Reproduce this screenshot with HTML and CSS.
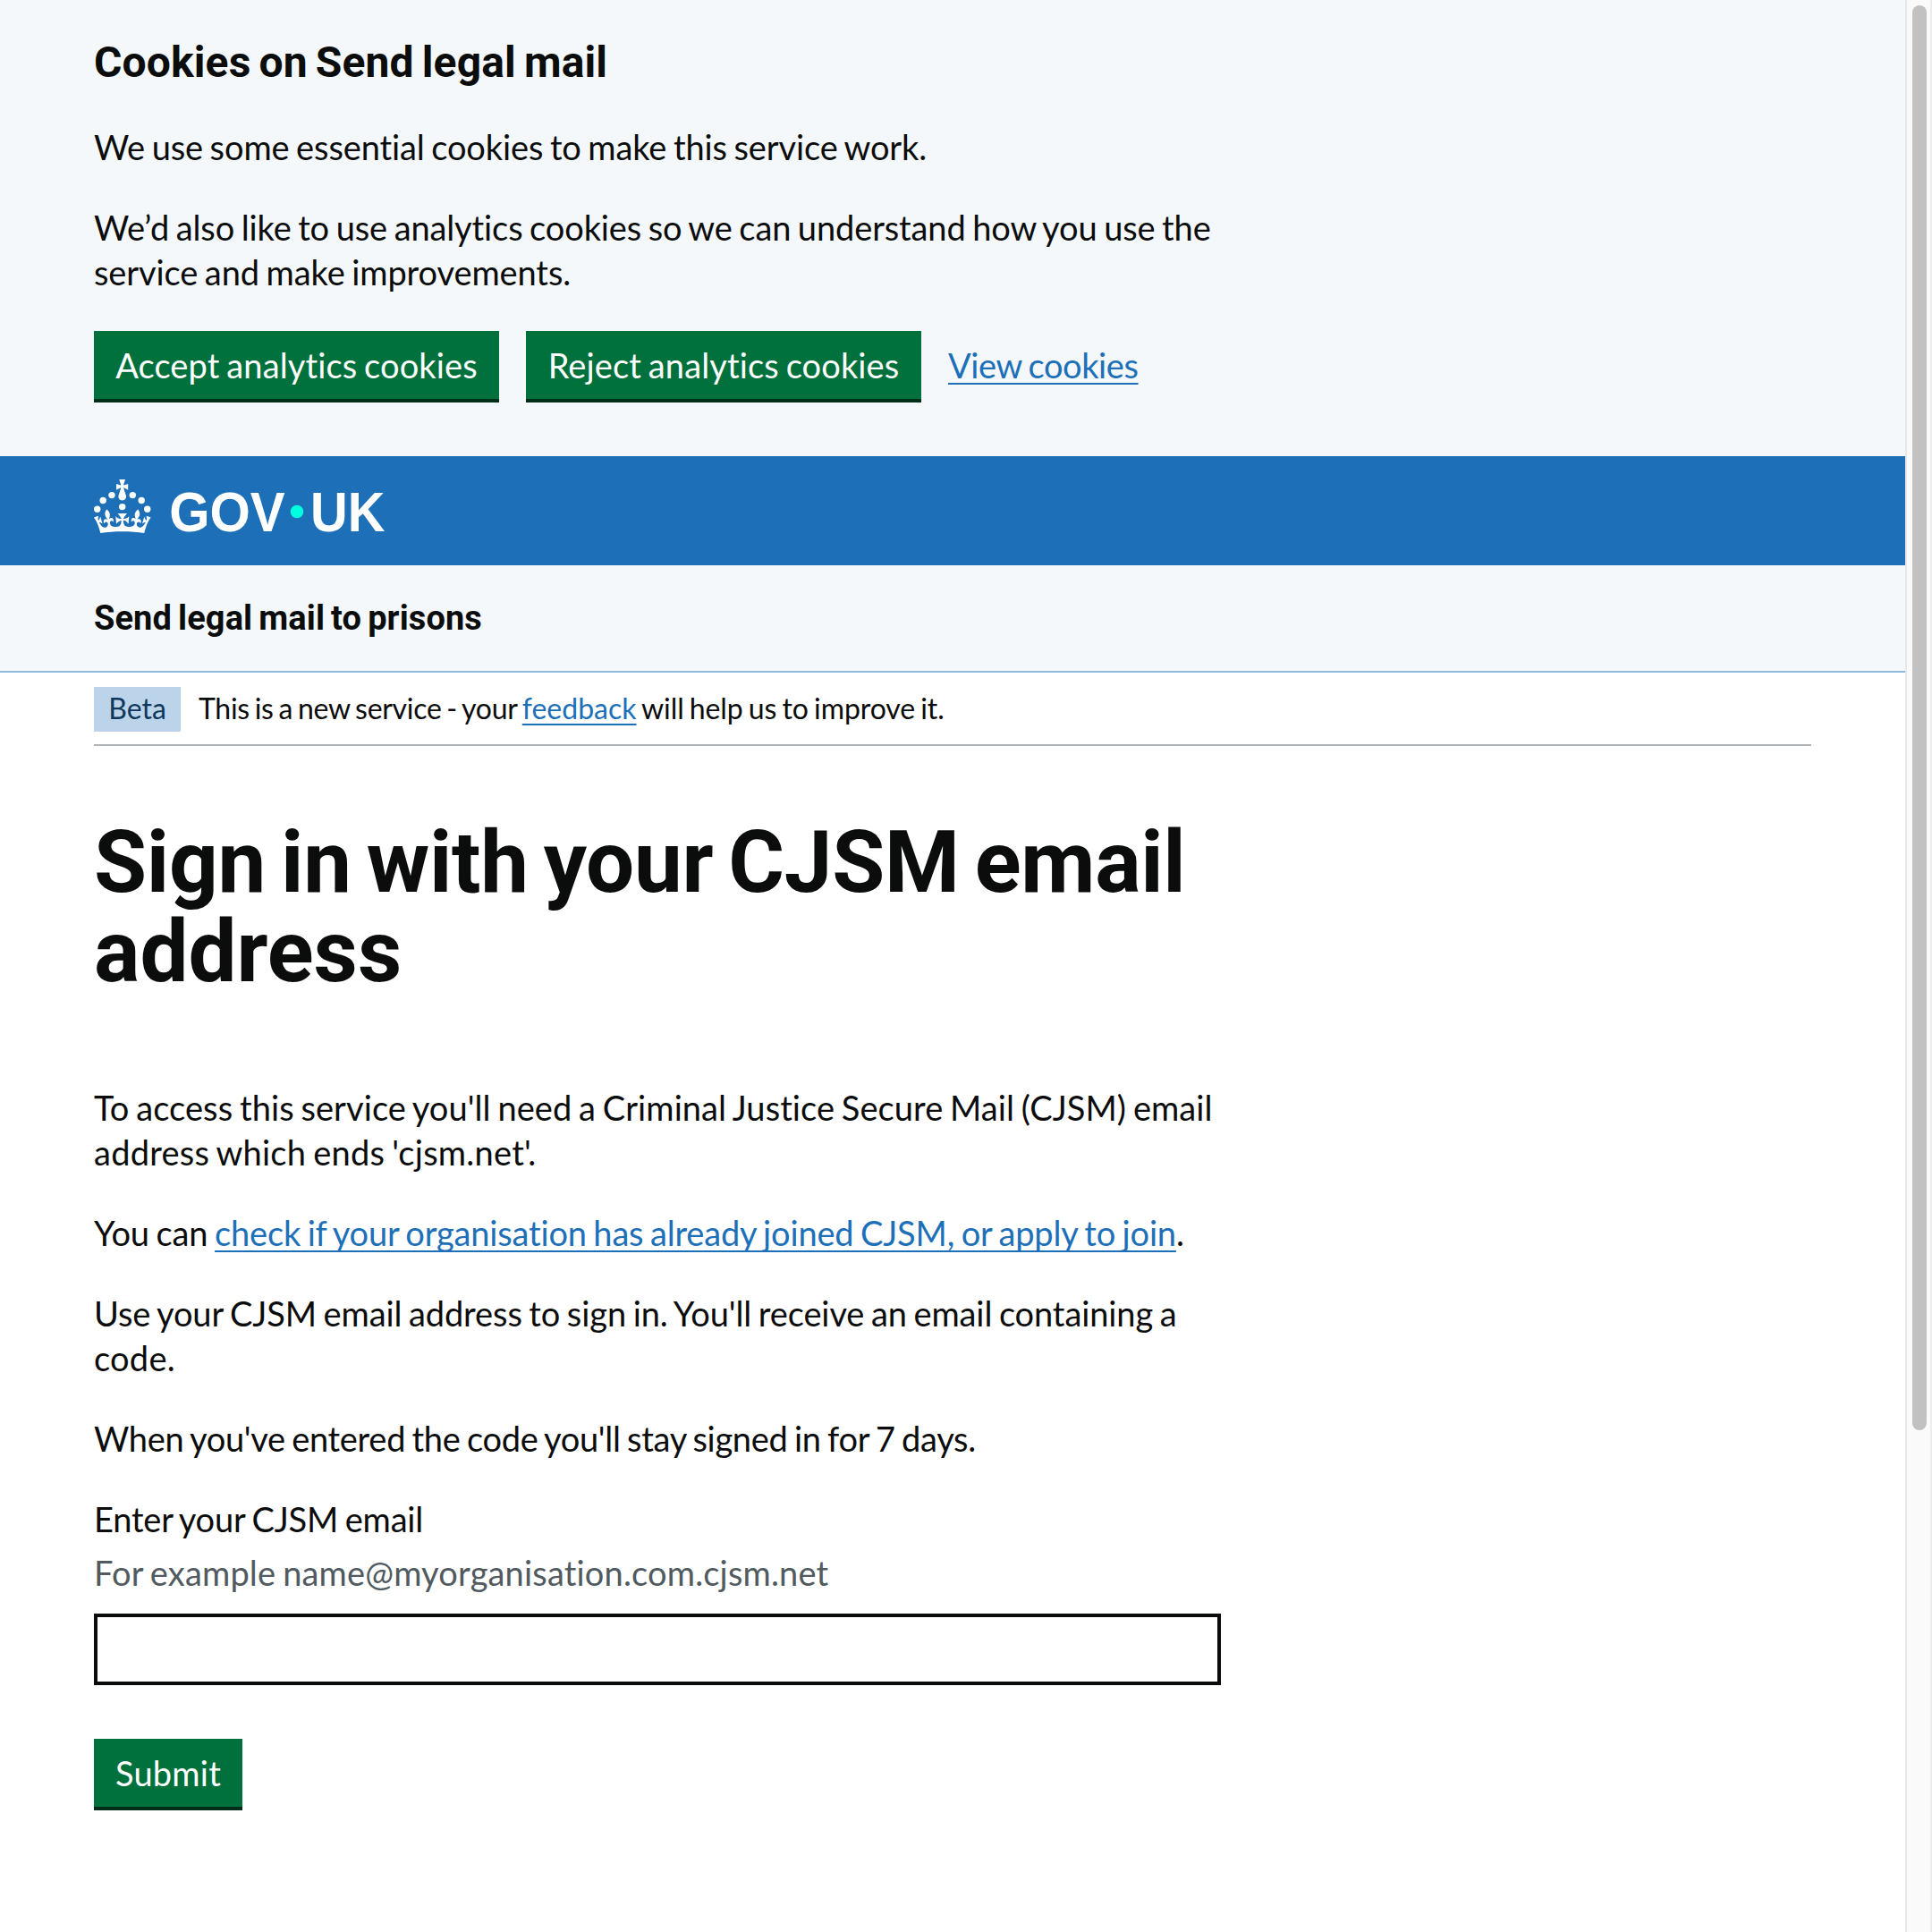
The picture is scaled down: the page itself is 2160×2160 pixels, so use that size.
FILE: index.html
```html
<!DOCTYPE html>
<html lang="en">
<head>
<meta charset="utf-8">
<title>Sign in with your CJSM email address</title>
<link rel="stylesheet" href="styles.css">
</head>
<body>
<div class="page">
  <section class="cookie-banner">
    <h2 class="cookie-title">Cookies on Send legal mail</h2>
    <div class="cookie-text">
      <p><span class="ls-n11">We use some essential cookies to make this service work.</span></p>
      <p><span class="ls-n11">We’d also like to use analytics cookies so we can understand how you use the</span><br><span class="ls-n10">service and make improvements.</span></p>
    </div>
    <div class="button-group">
      <button class="button ls-p10" type="button">Accept analytics cookies</button>
      <button class="button reject ls-p10" type="button">Reject analytics cookies</button>
      <a class="link view-link" href="#">View cookies</a>
    </div>
  </section>

  <header class="header">
    <svg class="logo" viewBox="0 0 324 60" width="324" height="60" role="img" aria-label="GOV.UK">
      <g fill="#fff">
        <circle cx="20" cy="17.6" r="3.7"/><circle cx="10.2" cy="23.5" r="3.7"/><circle cx="3.7" cy="33.2" r="3.7"/><circle cx="31.7" cy="30.6" r="3.7"/><circle cx="43.3" cy="17.6" r="3.7"/><circle cx="53.2" cy="23.5" r="3.7"/><circle cx="59.7" cy="33.2" r="3.7"/>
        <path d="M33.1,9.8c.2-.1.3-.3.5-.5l4.6,2.4v-6.8l-4.6,1.5c-.1-.2-.3-.3-.5-.5l1.9-5.9h-6.7l1.9,5.9c-.2.1-.3.3-.5.5l-4.6-1.5v6.8l4.6-2.4c.1.2.3.3.5.5l-2.6,8c-.9,2.8,1.2,5.7,4.1,5.7h0c3,0,5.1-2.9,4.1-5.7l-2.6-8ZM37,37.9s-3.4,3.8-4.1,6.1c2.2,0,4.2-.5,6.4-2.8l-.7,8.5c-2-2.8-4.4-4.1-5.7-3.8.1,3.1.5,6.7,5.8,7.2,3.7.3,6.7-1.5,7-3.8.4-2.6-2-4.3-3.7-1.6-1.4-4.5,2.4-6.1,4.9-3.2-1.9-4.5-1.8-7.7,2.4-10.9,3,4,2.6,7.3-1.2,11.1,2.4-1.3,6.2,0,4,4.6-1.2-2.8-3.7-2.2-4.2.2-.3,1.7.7,3.7,3,4.2,1.9.3,4.7-.9,7-5.9-1.3,0-2.4.7-3.9,1.7l2.4-8c.6,2.3,1.4,3.7,2.2,4.5.6-1.6.5-2.8,0-5.3l5,1.8c-2.6,3.6-5.2,8.7-7.3,17.5-7.4-1.1-15.7-1.7-24.5-1.7h0c-8.8,0-17.1.6-24.5,1.7-2.1-8.9-4.7-13.9-7.3-17.5l5-1.8c-.5,2.5-.6,3.7,0,5.3.8-.8,1.6-2.3,2.2-4.5l2.4,8c-1.5-1-2.6-1.7-3.9-1.7,2.3,5,5.2,6.2,7,5.9,2.3-.4,3.3-2.4,3-4.2-.5-2.4-3-3.1-4.2-.2-2.2-4.6,1.6-6,4-4.6-3.7-3.7-4.2-7.1-1.2-11.1,4.2,3.2,4.3,6.4,2.4,10.9,2.5-2.8,6.3-1.3,4.9,3.2-1.8-2.7-4.1-1-3.7,1.6.3,2.3,3.3,4.1,7,3.8,5.4-.5,5.7-4.2,5.8-7.2-1.3-.2-3.7,1-5.7,3.8l-.7-8.5c2.2,2.3,4.2,2.7,6.4,2.8-.7-2.3-4.1-6.1-4.1-6.1h10.6,0Z"/>
        <text class="logo-text" x="84.2" y="57.8" textLength="129.5" lengthAdjust="spacingAndGlyphs">GOV</text>
        <text class="logo-text" x="242" y="57.8" textLength="83.5" lengthAdjust="spacingAndGlyphs">UK</text>
      </g>
      <circle cx="227" cy="36" r="7.3" fill="#00ffe0"/>
    </svg>
  </header>

  <nav class="service-nav">Send legal mail to prisons</nav>

  <div class="container">
    <div class="phase-banner">
      <strong class="tag">Beta</strong>
      <span class="phase-text"><span class="ls-n30">This is a new service - your </span><a class="link" href="#">feedback</a><span class="ls-n07"> will help us to improve it.</span></span>
    </div>

    <main class="main">
      <h1><span class="ls-n30">Sign in with your CJSM email</span><br><span>address</span></h1>
      <p><span class="ls-p07">To access this service you'll need a Criminal Justice Secure Mail (CJSM) email</span><br><span class="ls-p25">address which ends 'cjsm.net'.</span></p>
      <p><span class="ls-n11">You can </span><a class="link ls-n16" href="#">check if your organisation has already joined CJSM, or apply to join</a>.</p>
      <p><span class="ls-n10">Use your CJSM email address to sign in. You'll receive an email containing a</span><br><span class="ls-p25">code.</span></p>
      <p><span class="ls-n30">When you've entered the code you'll stay signed in for 7 days.</span></p>
      <form class="form">
        <label class="label ls-n16" for="email">Enter your CJSM email</label>
        <div class="hint">For example name@myorganisation.com.cjsm.net</div>
        <input class="input" id="email" type="email">
        <button class="button submit ls-p25" type="button">Submit</button>
      </form>
    </main>
  </div>
</div>
<div class="scrollbar"><div class="thumb"></div></div>
</body>
</html>
```

FILE: styles.css
```css
* { box-sizing: border-box; }

body {
  margin: 0;
  height: 2160px;
  display: flex;
  overflow: hidden;
  background: #fff;
  color: #0b0c0c;
  font: 400 38px/50px Lato, "Liberation Sans", sans-serif;
  word-spacing: -2px;
}

.page { flex: 1; min-width: 0; }

p { margin: 0 0 40px; white-space: nowrap; }

.link {
  color: #1d70b8;
  text-decoration: underline;
  text-decoration-thickness: 2px;
  text-underline-offset: 6px;
  text-decoration-skip-ink: none;
}

/* Cookie banner */
.cookie-banner {
  height: 510px;
  padding: 40px 105px 0;
  background: #f4f8fb;
}
.cookie-title {
  margin: 0 0 39px;
  font: 700 48px/60px Roboto, "Liberation Sans", sans-serif;
  letter-spacing: 0.13px;
  word-spacing: -3px;
}
.cookie-text p:last-child { margin-bottom: 41px; }
.button-group { display: flex; gap: 30px; }

.button {
  width: 453px;
  height: 76px;
  padding: 19px 0;
  border: 0;
  border-radius: 0;
  background: #00703c;
  box-shadow: 0 4px 0 #002d18;
  color: #fff;
  font: 400 38px/38px Lato, "Liberation Sans", sans-serif;
  word-spacing: -2px;
  text-align: center;
  white-space: nowrap;
}
.button.reject { width: 442px; }
.button.submit { width: 166px; }
.view-link {
  padding-top: 13px;
  letter-spacing: -0.4px;
  text-underline-offset: 5px;
}

/* Header */
.header {
  height: 122px;
  padding: 26px 105px 0;
  background: #1d70b8;
}
.logo { display: block; overflow: visible; }
.logo-text { font: 700 63.5px "Liberation Sans", Arial, sans-serif; }

.service-nav {
  height: 120px;
  padding: 34px 105px 0;
  background: #f4f8fb;
  border-bottom: 2px solid #8eb8dc;
  font: 700 38px/50px Roboto, "Liberation Sans", sans-serif;
  letter-spacing: 0.1px;
  word-spacing: -2.5px;
}

.container { padding: 0 105px; }

/* Phase banner */
.phase-banner {
  display: flex;
  gap: 20px;
  padding: 16px 0 14px;
  border-bottom: 2px solid #b1b4b6;
  font-size: 32px;
  line-height: 40px;
}
.phase-banner .link { text-underline-offset: 5px; }
.tag {
  width: 97px;
  padding: 4px 0 6px;
  background: #bbd4ea;
  color: #0f385c;
  font-weight: 400;
  text-align: center;
}
.phase-text { padding-top: 4px; white-space: pre; }

/* Main content */
.main { width: 1260px; padding-top: 80px; }
.main .link { text-underline-offset: 5px; }
h1 {
  margin: 0 0 99px;
  font: 700 96px/100px Roboto, "Liberation Sans", sans-serif;
  word-spacing: -6.5px;
  white-space: nowrap;
}
.form { display: flex; flex-direction: column; align-items: flex-start; }
.label { margin-bottom: 10px; }
.hint { margin-bottom: 21px; color: #505a5f; letter-spacing: 0.17px; }
.input {
  width: 100%;
  height: 80px;
  margin-bottom: 60px;
  border: 4px solid #0b0c0c;
  border-radius: 0;
  background: #fff;
}

/* Scrollbar */
.scrollbar {
  width: 30px;
  padding: 6px 4px 0 6px;
  background: #fafafa;
  border-left: 2px solid #e8e8e8;
  border-right: 2px solid #ededed;
}
.thumb { width: 16px; height: 1593px; border-radius: 8px; background: #c1c1c1; }

/* Tracking */
.ls-n30 { letter-spacing: -0.3px; }
.ls-n16 { letter-spacing: -0.17px; }
.ls-n11 { letter-spacing: -0.115px; }
.ls-n10 { letter-spacing: -0.1px; }
.ls-n07 { letter-spacing: -0.07px; }
.ls-p07 { letter-spacing: 0.07px; }
.ls-p10 { letter-spacing: 0.12px; }
.ls-p25 { letter-spacing: 0.25px; }
```
